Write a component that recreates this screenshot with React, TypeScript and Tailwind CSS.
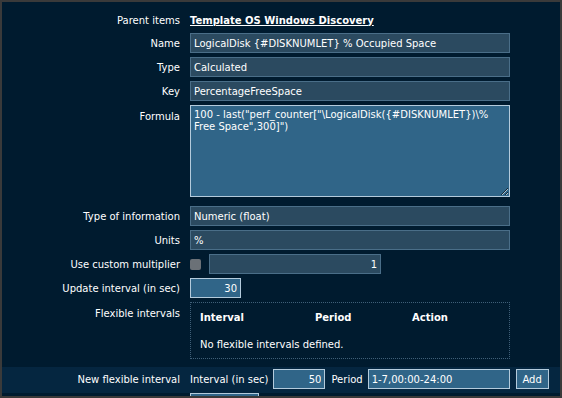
import React from "react";

const inputCls =
  "h-[20px] border border-[#4a6e88] bg-[#2b4a60] px-[3px] text-white outline-none";
const activeCls =
  "h-[20px] border border-[#b4cbdc] bg-[#306588] px-[3px] text-white outline-none";

function Row({
  label,
  children,
  className = "",
  top = false,
}: {
  label: string;
  children: React.ReactNode;
  className?: string;
  top?: boolean;
}) {
  return (
    <div className={`flex ${top ? "items-start" : "items-center"} ${className}`}>
      <div className={`w-[178px] shrink-0 pr-0 text-right ${top ? "pt-[4px]" : ""}`}>{label}</div>
      <div className="ml-[10px] flex items-center">{children}</div>
    </div>
  );
}

export default function App() {
  return (
    <div className="h-[398px] w-[562px] overflow-hidden border-2 border-[#3a3a3a] bg-[#001b2f] font-['DejaVu_Sans',sans-serif] text-[10px] text-white">
      <div className="pt-[8px]">
        <Row label="Parent items" className="h-[20px]">
          <a href="#" className="font-bold text-white underline">
            Template OS Windows Discovery
          </a>
        </Row>

        <Row label="Name" className="mt-[3px]">
          <input className={`${inputCls} w-[320px]`} readOnly value="LogicalDisk {#DISKNUMLET} % Occupied Space" />
        </Row>
        <Row label="Type" className="mt-[4px]">
          <input className={`${inputCls} w-[320px]`} readOnly value="Calculated" />
        </Row>
        <Row label="Key" className="mt-[4px]">
          <input className={`${inputCls} w-[320px]`} readOnly value="PercentageFreeSpace" />
        </Row>
        <Row label="Formula" className="mt-[4px]" top>
          <textarea
            className="block h-[92px] w-[320px] border border-[#b4cbdc] bg-[#306588] px-[3px] py-[3px] leading-[12px] text-white outline-none"
            readOnly
            defaultValue={'100 - last("perf_counter["\\LogicalDisk({#DISKNUMLET})\\% Free Space",300]")'}
          />
        </Row>
        <Row label="Type of information" className="mt-[9px]">
          <input className={`${inputCls} w-[320px]`} readOnly value="Numeric (float)" />
        </Row>
        <Row label="Units" className="mt-[4px]">
          <input className={`${inputCls} w-[320px]`} readOnly value="%" />
        </Row>
        <Row label="Use custom multiplier" className="mt-[4px]">
          <div className="h-[11px] w-[11px] rounded-[2px] bg-[#6b7177]" />
          <input className={`${inputCls} ml-[8px] w-[172px] text-right`} readOnly value="1" />
        </Row>
        <Row label="Update interval (in sec)" className="mt-[4px]">
          <input className={`${activeCls} w-[51px] text-right`} readOnly value="30" />
        </Row>
        <Row label="Flexible intervals" className="mt-[4px]" top>
          <div className="h-[57px] w-[320px] border border-dotted border-[#3f5f78] px-[9px] pt-[7px]">
            <div className="flex font-bold">
              <div className="w-[115px]">Interval</div>
              <div className="w-[97px]">Period</div>
              <div>Action</div>
            </div>
            <div className="mt-[12px]">No flexible intervals defined.</div>
          </div>
        </Row>

        <div className="mt-[8px] bg-[#052640] pb-[4px] pt-[2px]">
          <Row label="New flexible interval">
            <span>Interval (in sec)</span>
            <input className={`${activeCls} ml-[5px] w-[52px] text-right`} readOnly value="50" />
            <span className="ml-[6px]">Period</span>
            <input className={`${activeCls} ml-[5px] w-[142px]`} readOnly value="1-7,00:00-24:00" />
            <button className="ml-[6px] h-[20px] w-[33px] border border-[#b4cbdc] bg-[#306588] text-white">
              Add
            </button>
          </Row>
        </div>
        <div className="flex">
          <div className="ml-[188px] h-[20px] w-[69px] border border-[#b4cbdc] bg-[#306588]" />
        </div>
      </div>
    </div>
  );
}
